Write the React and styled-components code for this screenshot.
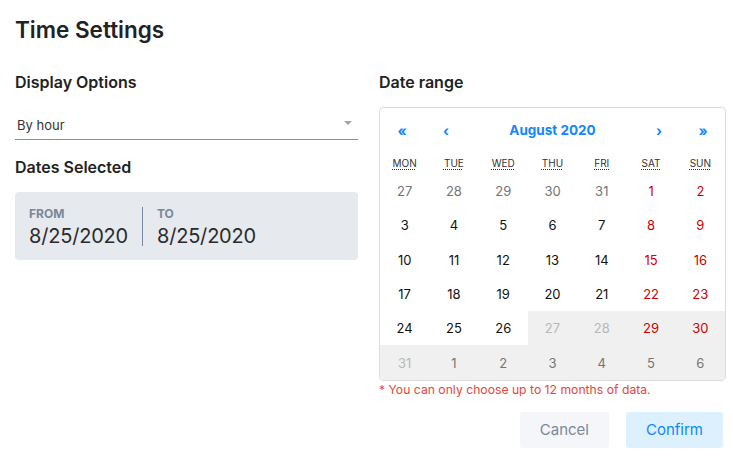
import React from 'react';
import styled, { createGlobalStyle } from 'styled-components';

const GlobalStyle = createGlobalStyle`
	body {
		margin: 0;
		background: #fff;
		font-family: Inter, 'Liberation Sans', sans-serif;
		color: #222;
	}
`;

const WEEKDAYS = [
	['MON', 'Monday'],
	['TUE', 'Tuesday'],
	['WED', 'Wednesday'],
	['THU', 'Thursday'],
	['FRI', 'Friday'],
	['SAT', 'Saturday'],
	['SUN', 'Sunday'],
];

// tone: 'other' (neighbour month), 'normal', 'weekend'; disabled greys the tile
const buildDays = () => {
	const days = [];
	[27, 28, 29, 30, 31].forEach((d) => days.push({ d, tone: 'other' }));
	for (let d = 1; d <= 31; d++) {
		const col = days.length % 7;
		const disabled = d >= 27;
		days.push({ d, tone: col >= 5 ? 'weekend' : 'normal', disabled });
	}
	[1, 2, 3, 4, 5, 6].forEach((d) => days.push({ d, tone: 'other', disabled: true }));
	return days;
};

const App = () => {
	const days = buildDays();
	return (
		<>
			<GlobalStyle />
			<Page>
				<Title>Time Settings</Title>
				<Columns>
					<Column>
						<SectionTitle>Display Options</SectionTitle>
						<Select>
							<span>By hour</span>
							<Caret />
						</Select>
						<SectionTitle>Dates Selected</SectionTitle>
						<RangeBox>
							<RangePart>
								<RangeLabel>From</RangeLabel>
								<RangeValue>8/25/2020</RangeValue>
							</RangePart>
							<RangeDivider />
							<RangePart>
								<RangeLabel>To</RangeLabel>
								<RangeValue>8/25/2020</RangeValue>
							</RangePart>
						</RangeBox>
					</Column>
					<Column>
						<SectionTitle>Date range</SectionTitle>
						<Calendar>
							<Nav>
								<NavArrow>«</NavArrow>
								<NavArrow>‹</NavArrow>
								<NavLabel>August 2020</NavLabel>
								<NavArrow>›</NavArrow>
								<NavArrow>»</NavArrow>
							</Nav>
							<Weekdays>
								{WEEKDAYS.map(([short, full]) => (
									<Weekday key={short}>
										<abbr title={full}>{short}</abbr>
									</Weekday>
								))}
							</Weekdays>
							<Days>
								{days.map((day, i) => (
									<Day key={i} $tone={day.tone} $disabled={day.disabled}>
										{day.d}
									</Day>
								))}
							</Days>
						</Calendar>
						<Hint>* You can only choose up to 12 months of data.</Hint>
						<Actions>
							<Button>Cancel</Button>
							<Button $primary>Confirm</Button>
						</Actions>
					</Column>
				</Columns>
			</Page>
		</>
	);
};

export default App;

const Page = styled.div`
	padding: 16px 7px 0 15px;
`;

const Title = styled.h1`
	margin: 0 0 27px;
	font-size: 22.5px;
	font-weight: 600;
	line-height: 28px;
	color: #222;
`;

const Columns = styled.div`
	display: grid;
	grid-template-columns: 343px 347px;
	column-gap: 21px;
`;

const Column = styled.div`
	display: flex;
	flex-direction: column;
`;

const SectionTitle = styled.h2`
	margin: 0;
	font-size: 16px;
	font-weight: 600;
	line-height: 22px;
	color: #222;
`;

const Select = styled.div`
	display: flex;
	align-items: center;
	justify-content: space-between;
	margin: 18px 0 16px;
	padding: 0 6px 0 2px;
	height: 29px;
	box-sizing: border-box;
	border-bottom: 1px solid #858d9a;
	font-size: 13px;
	color: #333;
`;

const Caret = styled.span`
	width: 0;
	height: 0;
	border-left: 4px solid transparent;
	border-right: 4px solid transparent;
	border-top: 4px solid #a0a6b1;
	margin-bottom: 4px;
`;

const RangeBox = styled.div`
	display: flex;
	align-items: flex-start;
	margin-top: 14px;
	height: 68px;
	box-sizing: border-box;
	padding: 15px 14px 0;
	background: #e6e9ee;
	border-radius: 4px;
`;

const RangePart = styled.div`
	display: flex;
	flex-direction: column;
`;

const RangeLabel = styled.span`
	font-size: 12px;
	font-weight: 700;
	text-transform: uppercase;
	color: #7b879a;
	line-height: 14px;
`;

const RangeValue = styled.span`
	margin-top: 3px;
	font-size: 20px;
	line-height: 24px;
	letter-spacing: -0.2px;
	color: #2b2b2b;
`;

const RangeDivider = styled.div`
	align-self: center;
	width: 1px;
	height: 39px;
	margin: -15px 14px 0;
	background: #7b879a;
`;

const Calendar = styled.div`
	margin-top: 14px;
	border: 1px solid #dcdcdc;
	border-radius: 4px;
	overflow: hidden;
	font-size: 13px;
`;

const Nav = styled.div`
	display: grid;
	grid-template-columns: 44px 44px 1fr 44px 44px;
	align-items: center;
	height: 44px;
`;

const NavArrow = styled.span`
	text-align: center;
	font-size: 14px;
	font-weight: 700;
	color: #1087ff;
`;

const NavLabel = styled.span`
	text-align: center;
	font-size: 13.5px;
	font-weight: 700;
	color: #1087ff;
`;

const Weekdays = styled.div`
	display: grid;
	grid-template-columns: repeat(7, 1fr);
	height: 22px;
	align-items: center;
`;

const Weekday = styled.div`
	text-align: center;
	font-size: 10px;
	color: #333;

	abbr {
		text-decoration: underline dotted;
		text-underline-offset: 2px;
	}
`;

const Days = styled.div`
	display: grid;
	grid-template-columns: repeat(7, 1fr);
	grid-auto-rows: 34.3px;
`;

const dayColor = ({ $tone, $disabled }) => {
	if ($tone === 'weekend') return '#d10000';
	if ($tone === 'other') return '#757575';
	return $disabled ? '#b8b8b8' : '#111';
};

const Day = styled.div`
	display: flex;
	align-items: center;
	justify-content: center;
	font-size: 13px;
	color: ${dayColor};
	background: ${({ $disabled }) => ($disabled ? '#f0f0f0' : '#fff')};

	&:nth-child(36) {
		color: #b8b8b8;
	}
`;

const Hint = styled.p`
	margin: 1px 0 0;
	font-size: 12.2px;
	line-height: 16px;
	color: #e8453c;
`;

const Actions = styled.div`
	display: flex;
	justify-content: flex-end;
	gap: 17px;
	margin-top: 14px;
	padding-right: 3px;
`;

const Button = styled.button`
	height: 36px;
	padding: 0 20px;
	border: none;
	border-radius: 3px;
	font-family: inherit;
	font-size: 15px;
	cursor: pointer;
	background: ${({ $primary }) => ($primary ? '#dcf0fd' : '#f4f6f9')};
	color: ${({ $primary }) => ($primary ? '#1087ff' : '#7b879a')};
`;
